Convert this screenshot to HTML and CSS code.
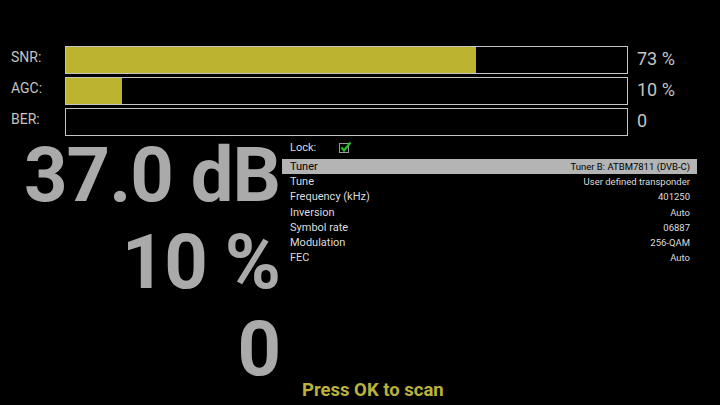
FILE: index.html
```html
<!DOCTYPE html>
<html lang="en">
<head>
  <meta charset="UTF-8">
  <title>Signal</title>
  <link rel="stylesheet" href="styles.css">
</head>
<body>

<div id="bars">
  <div class="label">SNR:</div>
  <div class="bar"><div class="fill" style="width: 73%"></div></div>
  <div class="value">73 %</div>

  <div class="label">AGC:</div>
  <div class="bar"><div class="fill" style="width: 10%"></div></div>
  <div class="value">10 %</div>

  <div class="label">BER:</div>
  <div class="bar"><div class="fill" style="width: 0%"></div></div>
  <div class="value">0</div>
</div>

<div id="main">
  <div class="big">
    <div>37.0 dB</div>
    <div>10 %</div>
    <div>0</div>
  </div>

  <div class="info">
    <div class="lock">
      <span>Lock:</span>
      <svg class="check" width="13" height="12" viewBox="0 0 13 12">
        <rect x="0.5" y="2.5" width="9" height="9" fill="none" stroke="#9a9a9a"/>
        <path d="M2.5 6.5 L5 9.5 L11.5 1.5" fill="none" stroke="#22c02a" stroke-width="2.2"/>
      </svg>
    </div>
    <div class="rows">
      <div class="row selected"><span>Tuner</span><span>Tuner B: ATBM7811 (DVB-C)</span></div>
      <div class="row"><span>Tune</span><span>User defined transponder</span></div>
      <div class="row"><span>Frequency (kHz)</span><span>401250</span></div>
      <div class="row"><span>Inversion</span><span>Auto</span></div>
      <div class="row"><span>Symbol rate</span><span>06887</span></div>
      <div class="row"><span>Modulation</span><span>256-QAM</span></div>
      <div class="row"><span>FEC</span><span>Auto</span></div>
    </div>
    <div class="hint">Press OK to scan</div>
  </div>
</div>

</body>
</html>
```

FILE: styles.css
```css
html, body {
  margin: 0;
  padding: 0;
  height: 100%;
  background: #000;
  overflow: hidden;
  font-family: Roboto, "Liberation Sans", sans-serif;
}

#bars {
  display: grid;
  grid-template-columns: 65px 563px 1fr;
  grid-auto-rows: 28px;
  row-gap: 3px;
  padding-top: 46px;
}

.label {
  padding-left: 11px;
  font-size: 14px;
  line-height: 22px;
  color: #c4c4c4;
}

.bar {
  border: 1px solid #c4c4c4;
  background: #000;
}

.fill {
  height: 100%;
  background: #bcb32f;
}

.value {
  padding-left: 9px;
  font-size: 18px;
  line-height: 26px;
  color: #c4c4c4;
}

#main {
  display: flex;
  height: 270px;
}

.big {
  width: 280px;
  text-align: right;
  font-size: 76px;
  font-weight: 700;
  line-height: 87px;
  color: #aaaaaa;
  letter-spacing: -1px;
  margin-top: -4px;
}

.info {
  flex: 1;
  display: flex;
  flex-direction: column;
  padding-left: 2px;
  padding-right: 23px;
}

.lock {
  display: flex;
  align-items: center;
  gap: 23px;
  padding: 3px 0 0 8px;
  height: 17px;
  font-size: 11px;
  color: #dcdcdc;
}

.check {
  margin-top: -2px;
}

.rows {
  margin-top: 3px;
}

.row {
  display: flex;
  justify-content: space-between;
  height: 15.2px;
  line-height: 15px;
  padding: 0 7px 0 8px;
  font-size: 11px;
  color: #dcdcdc;
}

.row.selected {
  background: #b4b4b4;
  color: #000;
}

.row span:last-child {
  font-size: 9.5px;
}

.hint {
  margin-top: auto;
  padding-left: 20px;
  padding-bottom: 5px;
  font-size: 18.5px;
  font-weight: 700;
  color: #bab23c;
}
```
